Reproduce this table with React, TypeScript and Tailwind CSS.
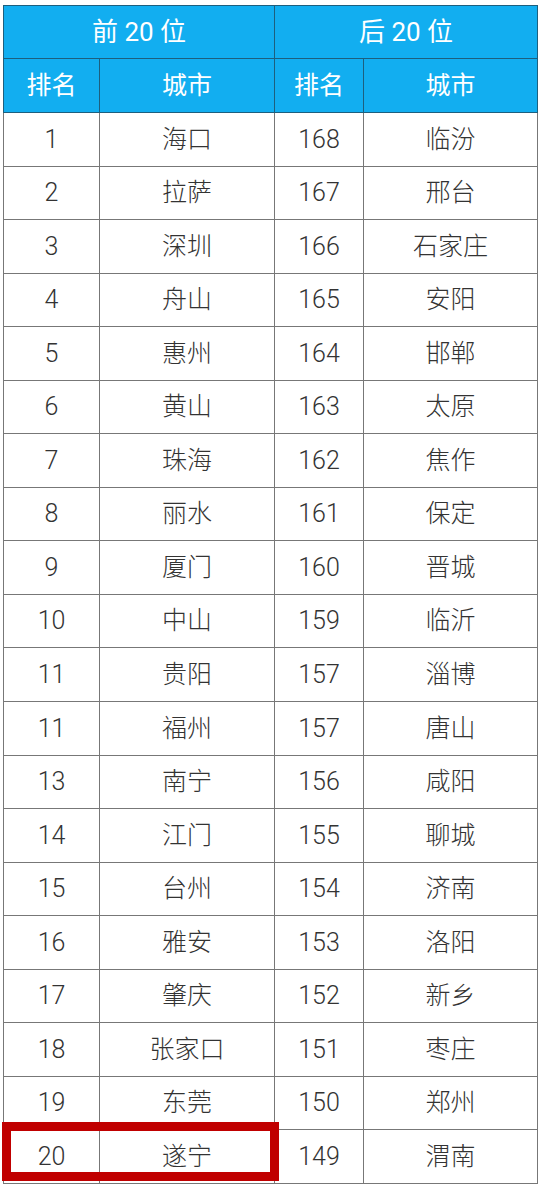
const rows: [string, string, string, string][] = [
  ['1', '海口', '168', '临汾'],
  ['2', '拉萨', '167', '邢台'],
  ['3', '深圳', '166', '石家庄'],
  ['4', '舟山', '165', '安阳'],
  ['5', '惠州', '164', '邯郸'],
  ['6', '黄山', '163', '太原'],
  ['7', '珠海', '162', '焦作'],
  ['8', '丽水', '161', '保定'],
  ['9', '厦门', '160', '晋城'],
  ['10', '中山', '159', '临沂'],
  ['11', '贵阳', '157', '淄博'],
  ['11', '福州', '157', '唐山'],
  ['13', '南宁', '156', '咸阳'],
  ['14', '江门', '155', '聊城'],
  ['15', '台州', '154', '济南'],
  ['16', '雅安', '153', '洛阳'],
  ['17', '肇庆', '152', '新乡'],
  ['18', '张家口', '151', '枣庄'],
  ['19', '东莞', '150', '郑州'],
  ['20', '遂宁', '149', '渭南'],
]

const head = 'border border-[#1d5f7e] bg-[#12aef0] text-white text-[25px] font-normal'
const cell = 'border border-[#777] text-[#333] text-[25px] font-light text-center h-[53.55px] p-0'

export default function App() {
  return (
    <div
      className="min-h-screen bg-white pt-[5px] pl-[3px]"
      style={{ fontFamily: 'Roboto, "Noto Sans CJK SC", sans-serif' }}
    >
      <div className="relative w-[534px]">
        <table className="w-[534px] table-fixed border-collapse">
          <colgroup>
            <col className="w-[96px]" />
            <col className="w-[175px]" />
            <col className="w-[89px]" />
            <col className="w-[174px]" />
          </colgroup>
          <thead>
            <tr>
              <th colSpan={2} className={`${head} h-[53px] text-[26px]`}>前 20 位</th>
              <th colSpan={2} className={`${head} h-[53px] text-[26px]`}>后 20 位</th>
            </tr>
            <tr>
              <th className={`${head} h-[54px]`}>排名</th>
              <th className={`${head} h-[54px]`}>城市</th>
              <th className={`${head} h-[54px]`}>排名</th>
              <th className={`${head} h-[54px]`}>城市</th>
            </tr>
          </thead>
          <tbody>
            {rows.map((r, i) => (
              <tr key={i}>
                {r.map((v, j) => (
                  <td key={j} className={cell}>{v}</td>
                ))}
              </tr>
            ))}
          </tbody>
        </table>
        {/* highlight around 遂宁 */}
        <div className="pointer-events-none absolute left-[-1px] top-[1117px] h-[59px] w-[277px] border-[9px] border-[#c00000]" />
      </div>
    </div>
  )
}
